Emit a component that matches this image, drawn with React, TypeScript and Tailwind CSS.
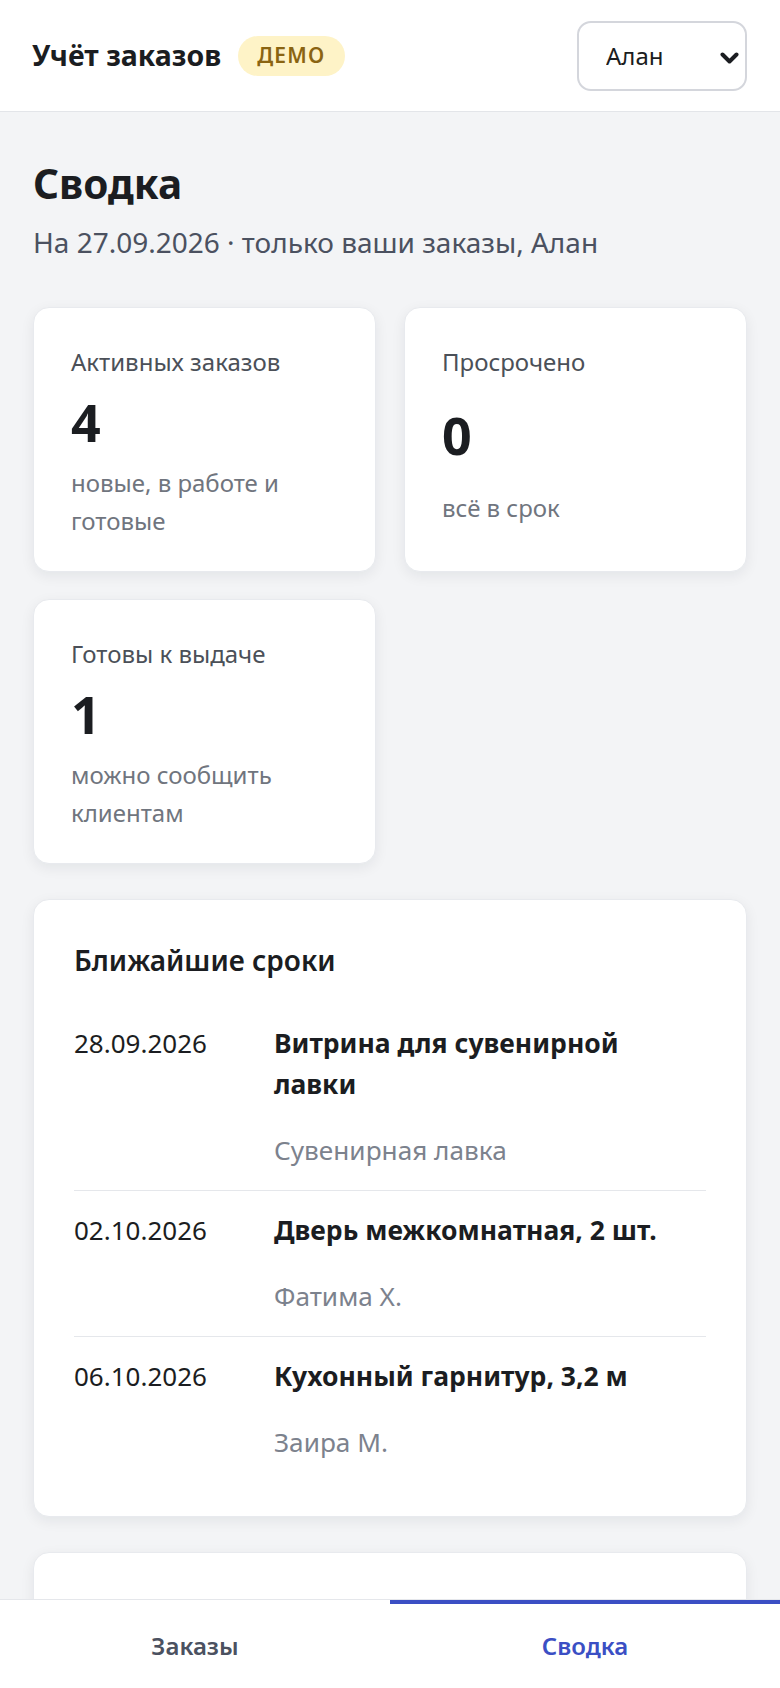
import { useState } from 'react';

const stats = [
  { label: 'Активных заказов', value: '4', note: 'новые, в работе и готовые' },
  { label: 'Просрочено', value: '0', note: 'всё в срок' },
  { label: 'Готовы к выдаче', value: '1', note: 'можно сообщить клиентам' },
];

const deadlines = [
  { date: '28.09.2026', title: 'Витрина для сувенирной лавки', client: 'Сувенирная лавка' },
  { date: '02.10.2026', title: 'Дверь межкомнатная, 2 шт.', client: 'Фатима Х.' },
  { date: '06.10.2026', title: 'Кухонный гарнитур, 3,2 м', client: 'Заира М.' },
];

export default function App() {
  const [user, setUser] = useState('Алан');
  const [tab, setTab] = useState('summary');

  return (
    <div className="h-[1688px] flex flex-col overflow-hidden bg-[#f3f4f6] font-['Noto_Sans',sans-serif] text-[#1b1d21]">
      <header className="h-[112px] shrink-0 flex items-center justify-between bg-white border-b border-[#e3e5e9] pl-[32px] pr-[33px]">
        <div className="flex items-center gap-[17px]">
          <span className="text-[28.5px] font-bold leading-none">Учёт заказов</span>
          <span className="h-[40px] px-[19px] flex items-center rounded-full bg-[#fef3c7] text-[#8a6412] text-[21px] font-semibold tracking-[0.06em]">
            ДЕМО
          </span>
        </div>
        <div className="relative">
          <select
            value={user}
            onChange={(e) => setUser(e.target.value)}
            className="appearance-none w-[170px] h-[70px] rounded-[14px] border-2 border-[#d4d6dc] bg-white pl-[27px] text-[24px] text-[#1b1d21] outline-none"
          >
            <option>Алан</option>
            <option>Фатима</option>
          </select>
          <svg
            className="pointer-events-none absolute right-[8px] top-[31px] w-[19px] h-[12px]"
            viewBox="0 0 19 12"
            fill="none"
          >
            <path d="M2.5 2.5 L9.5 9.5 L16.5 2.5" stroke="#1b1d21" strokeWidth="4" strokeLinecap="round" strokeLinejoin="round" />
          </svg>
        </div>
      </header>

      <main className="flex-1 overflow-hidden px-[33px] pt-[47px]">
        <h1 className="text-[40.5px] font-bold leading-[50px]">Сводка</h1>
        <p className="mt-[13px] text-[28px] leading-[40px] text-[#4b5160]">
          На 27.09.2026 · только ваши заказы, Алан
        </p>

        <div className="mt-[45px] flex flex-col gap-[35px]">
          <div className="grid grid-cols-2 gap-x-[28px] gap-y-[27px]">
            {stats.map((s) => (
              <div
                key={s.label}
                className="grid gap-y-[12px] rounded-[16px] border border-[#e8eaee] bg-white px-[37px] pt-[36px] pb-[31px] shadow-[0_4px_14px_rgba(17,24,39,0.07)]"
              >
                <div className="text-[24px] leading-[36px] text-[#4b5058]">{s.label}</div>
                <div className="text-[52px] font-bold leading-[60px]">{s.value}</div>
                <div className="text-[24px] leading-[38px] text-[#70757e]">{s.note}</div>
              </div>
            ))}
          </div>

          <section className="rounded-[16px] border border-[#e8eaee] bg-white px-[40px] pt-[40px] pb-[34px] shadow-[0_4px_14px_rgba(17,24,39,0.07)]">
            <h2 className="mb-[24px] text-[28px] font-semibold leading-[40px]">Ближайшие сроки</h2>
            {deadlines.map((d, i) => (
              <div
                key={d.date}
                className={i < deadlines.length - 1 ? 'flex py-[19px] border-b border-[#e5e7eb]' : 'flex py-[19px]'}
              >
                <div className="w-[200px] shrink-0 text-[26px] leading-[41px]">{d.date}</div>
                <div className="max-w-[405px]">
                  <div className="text-[26.5px] font-bold leading-[41px]">{d.title}</div>
                  <div className="mt-[25px] text-[26.2px] leading-[41px] text-[#7c828d]">{d.client}</div>
                </div>
              </div>
            ))}
          </section>

          <section className="h-[180px] shrink-0 rounded-[16px] border border-[#e8eaee] bg-white shadow-[0_4px_14px_rgba(17,24,39,0.07)]" />
        </div>
      </main>

      <nav className="h-[89px] shrink-0 grid grid-cols-2 bg-white border-t border-[#e5e7eb]">
        <button
          onClick={() => setTab('orders')}
          className={tab === 'orders' ? 'border-t-4 border-[#3b4fc4] text-[24px] font-semibold text-[#3b4fc4]' : 'border-t-4 border-transparent text-[24px] font-semibold text-[#4b5160]'}
        >
          Заказы
        </button>
        <button
          onClick={() => setTab('summary')}
          className={tab === 'summary' ? 'border-t-4 border-[#3b4fc4] text-[24px] font-semibold text-[#3b4fc4]' : 'border-t-4 border-transparent text-[24px] font-semibold text-[#4b5160]'}
        >
          Сводка
        </button>
      </nav>
    </div>
  );
}
